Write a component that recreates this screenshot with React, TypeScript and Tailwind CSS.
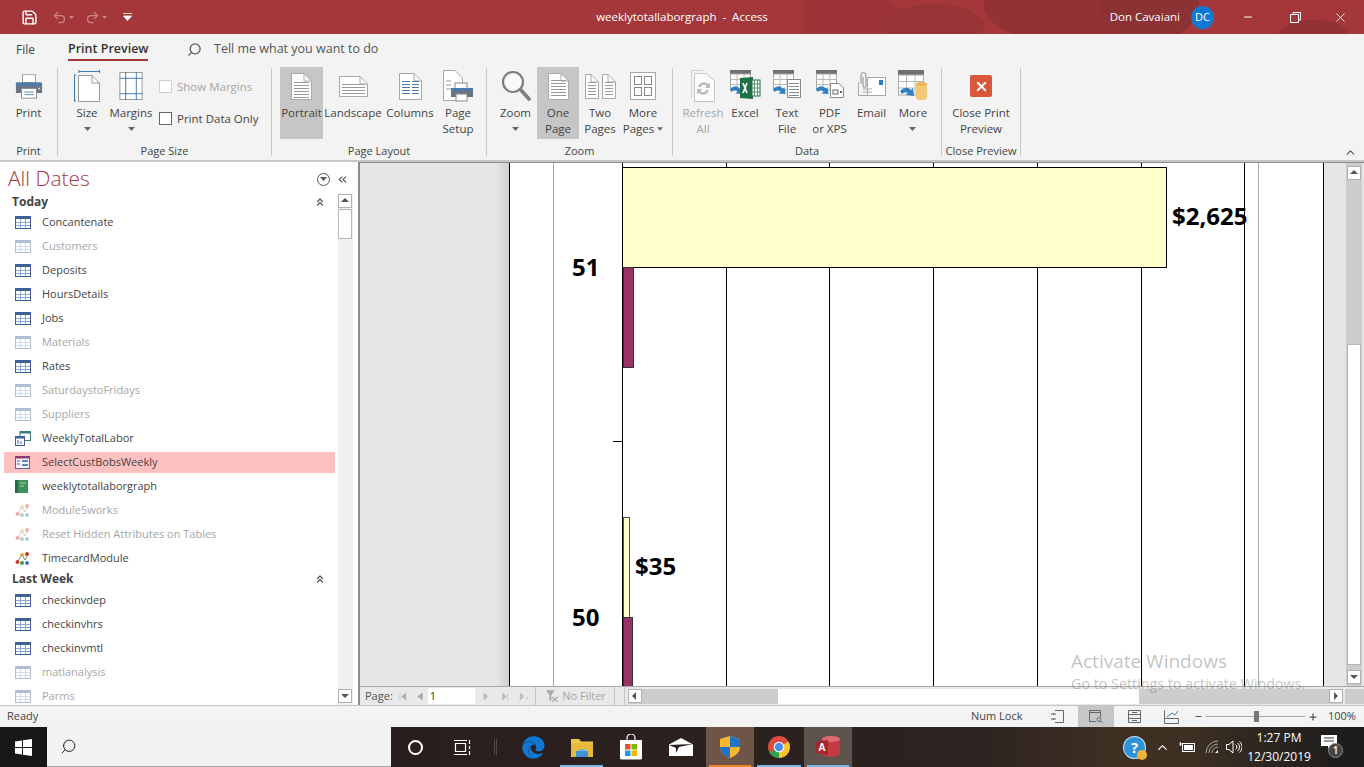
import React from 'react';
import { Save, Undo2, Redo2, Search, Minus, X, ChevronsUp, ChevronsLeft, ChevronUp, Plus } from 'lucide-react';
import { FaEdge } from 'react-icons/fa';

const Caret = ({ c = '#666' }: { c?: string }) => (
  <svg width="7" height="4" viewBox="0 0 7 4" className="mx-auto"><path d="M0 0h7L3.5 4z" fill={c} /></svg>
);

const PageLines = ({ x, y, w, n, gap = 3, c = '#999' }: { x: number; y: number; w: number; n: number; gap?: number; c?: string }) => (
  <>{Array.from({ length: n }).map((_, i) => <path key={i} d={`M${x} ${y + i * gap + 0.5}h${w}`} stroke={c} />)}</>
);

const Doc = ({ w, h, children }: { w: number; h: number; children?: React.ReactNode }) => (
  <svg width={w} height={h} viewBox={`0 0 ${w} ${h}`}>
    <path d={`M.5 .5H${w - 8}L${w - .5} 8V${h - .5}H.5z`} fill="#fff" stroke="#a8a8a8" />
    <path d={`M${w - 8} .5V8H${w - .5}`} fill="none" stroke="#a8a8a8" />
    {children}
  </svg>
);

const PrinterIcon = () => (
  <svg width="28" height="26" viewBox="0 0 30 30" preserveAspectRatio="none">
    <rect x="8" y="2" width="14" height="9" fill="#fff" stroke="#9a9a9a" />
    <path d="M3 11h24a2 2 0 0 1 2 2v10H1V13a2 2 0 0 1 2-2z" fill="#6b7480" />
    <path d="M1 11h28v4H1z" fill="#4a7bab" />
    <rect x="7" y="18" width="16" height="11" fill="#fff" stroke="#8a8a8a" />
    <path d="M10 22h10M10 25h10" stroke="#4a7bab" />
    <rect x="25" y="17" width="2" height="2" fill="#ddd" />
  </svg>
);

const SizeIcon = () => (
  <svg width="26" height="32" viewBox="0 0 26 32">
    <path d="M5 1.5h21M5 0v3M25.5 0v3M.5 5v26M0 5h2M0 31h2" stroke="#3d78ae" fill="none" />
    <path d="M4.5 5.5H18L25.5 13V31.5H4.5z" fill="#fff" stroke="#9a9a9a" />
    <path d="M18 5.5V13H25.5" fill="none" stroke="#9a9a9a" />
  </svg>
);
const MarginsIcon = () => (
  <svg width="24" height="28" viewBox="0 0 24 29">
    <rect x=".5" y=".5" width="23" height="28" fill="#fff" stroke="#9a9a9a" />
    <path d="M6.5 0v29M17.5 0v29M0 6.5h24M0 22.5h24" stroke="#3d78ae" />
  </svg>
);

const DataGrid = () => (
  <>
    <rect x="1" y="0" width="21" height="4" fill="#6f6f6f" />
    <rect x="1.5" y="4" width="20" height="16" fill="#fff" stroke="#a8a8a8" />
    <path d="M8 4v16M15 4v16M1 9.5h21M1 14.5h21" stroke="#b8b8b8" />
  </>
);
const Arrow = () => (
  <path d="M1 19q5-5 10-.5l1.5-1.5 1 7-7-.5 2-2q-3-2.5-6 .5z" fill="#2f7fc1" />
);

const ExcelIcon = () => (
  <svg width="32" height="32" viewBox="0 0 32 32"><DataGrid /><Arrow />
    <path d="M11 8l13-1v22l-13-1z" fill="#1e7145" /><rect x="23" y="10" width="8" height="16" fill="#fff" stroke="#1e7145" />
    <path d="M25.5 10v16M28.5 10v16M23 14h8M23 18h8M23 22h8" stroke="#1e7145" strokeWidth=".7" />
    <path d="M14 13l4 10M18 13l-4 10" stroke="#fff" strokeWidth="1.7" />
  </svg>
);
const TextFileIcon = () => (
  <svg width="30" height="32" viewBox="0 0 30 32"><DataGrid /><Arrow />
    <rect x="15.5" y="9.5" width="13" height="18" fill="#fff" stroke="#8a8a8a" />
    <PageLines x={17} y={13} w={10} n={5} c="#8a8a8a" />
  </svg>
);
const PdfIcon = () => (
  <svg width="30" height="32" viewBox="0 0 30 32"><DataGrid /><Arrow />
    <path d="M15.5 13.5H24L28.5 18V27.5H15.5z" fill="#fff" stroke="#8a8a8a" />
    <rect x="18" y="20" width="5" height="4" fill="none" stroke="#666" /><rect x="25" y="21" width="2" height="2" fill="#666" />
  </svg>
);
const EmailIcon = () => (
  <svg width="28" height="30" viewBox="0 0 28 30">
    <path d="M3 13V4a2.500 2.500 0 0 1 5 0v11a1.500 1.500 0 0 1-3 0V6" fill="none" stroke="#8a8a8a" />
    <rect x="9.500" y="6.500" width="18" height="18" fill="#fff" stroke="#a8a8a8" />
    <path d="M.5 11.500v13h27" fill="none" stroke="#a8a8a8" />
    <rect x="21" y="9" width="4" height="5" fill="#2f7fc1" />
    <path d="M5 18h9M5 21h9" stroke="#aaa" />
  </svg>
);
const MoreDataIcon = () => (
  <svg width="30" height="32" viewBox="0 0 30 32">
    <rect x="0" y="0" width="26" height="5" fill="#6f6f6f" />
    <rect x=".5" y="5" width="25" height="20" fill="#fff" stroke="#a8a8a8" />
    <path d="M8.500 5v20M17 5v20M0 11.500h26M0 18h26" stroke="#b8b8b8" />
    <path d="M2 21q6-6 11-1l2-2 1 8-8-1 2-2q-3-2-6 1z" fill="#2f7fc1" />
    <path d="M18 14a5 2 0 0 1 11 0v14a5 2 0 0 1-11 0z" fill="#f0c878" />
    <ellipse cx="23.500" cy="14" rx="5.500" ry="2" fill="#e9b75c" />
  </svg>
);

const RefreshIcon = () => (
  <svg width="24" height="32" viewBox="0 0 24 32">
    <path d="M3.500 3.500H15L23.500 11V31.500H3.500z" fill="#fbfbfb" stroke="#c4c4c4" />
    <path d="M.5 .5H12" stroke="#d0d0d0" />
    <path d="M.5 .5V28" stroke="#d0d0d0" />
    <path d="M7 17a6 6 0 0 1 10-3l2-1v5h-5l1.500-2a3.500 3.500 0 0 0-6 1zM18 20a6 6 0 0 1-10 3l-2 1v-5h5l-1.500 2a3.500 3.500 0 0 0 6-1z" fill="#bbb" />
  </svg>
);

const ClosePrev = () => (
  <div className="w-[22px] h-[22px] rounded-[2px] bg-[#d9573a] flex items-center justify-center">
    <X size={15} color="#fff" strokeWidth={3.2} />
  </div>
);

const ZoomIcon = () => (
  <svg width="30" height="32" viewBox="0 0 30 32">
    <circle cx="12" cy="12" r="10" fill="#fff" fillOpacity=".5" stroke="#7d7d7d" strokeWidth="2.200" />
    <path d="M19.500 19.500L28 29" stroke="#7d7d7d" strokeWidth="3.600" strokeLinecap="round" />
  </svg>
);

type BtnProps = { w: string; icon: React.ReactNode; lines: string[]; active?: boolean; dim?: boolean; caret?: boolean; inlineCaret?: boolean };
const Btn = ({ w, icon, lines, active, dim, caret, inlineCaret }: BtnProps) => (
  <div className={`${w} h-[72px] flex flex-col items-center shrink-0 ${active ? 'bg-[#c6c6c6]' : ''}`}>
    <div className="h-[38px] w-full flex items-center justify-center">{icon}</div>
    <div className={`text-[11.5px] leading-[16px] text-center whitespace-nowrap ${dim ? 'text-[#a6a6a6]' : 'text-[#444]'}`}>
      {lines.map((l, i) => (
        <div key={i} className="flex items-center justify-center gap-[3px]">
          {l}{inlineCaret && i === lines.length - 1 ? <svg width="6" height="4" viewBox="0 0 7 4"><path d="M0 0h7L3.500 4z" fill="#666" /></svg> : null}
        </div>
      ))}
      {caret ? <div className="h-[16px] flex items-center"><Caret /></div> : null}
    </div>
  </div>
);

const Group = ({ w, pl, label, children }: { w: string; pl: string; label: string; children: React.ReactNode }) => (
  <div className={`${w} shrink-0 flex flex-col`}>
    <div className={`h-[79px] pt-[3px] flex ${pl}`}>{children}</div>
    <div className="h-[17px] flex items-center justify-center text-[11px] text-[#444] whitespace-nowrap">{label}</div>
  </div>
);
const Sep = () => <div className="w-px h-[88px] mt-[4px] bg-[#c8c8c8] shrink-0" />;

const TableIcon = ({ dim }: { dim?: boolean }) => (
  <svg width="16" height="13" viewBox="0 0 16 13" opacity={dim ? .4 : 1}>
    <rect x=".5" y=".5" width="15" height="12" fill="#fff" stroke="#3f5f98" />
    <rect x="0" y="0" width="16" height="3" fill="#3f5f98" />
    <path d="M5.500 3v9M10.500 3v9M1 6.500h14M1 9.500h14" stroke="#8ba6d4" />
  </svg>
);
const QueryIcon = () => (
  <svg width="16" height="15" viewBox="0 0 16 15">
    <rect x="5" y=".5" width="10.500" height="9" fill="#fff" stroke="#3a7d7d" />
    <rect x="5" y="0" width="11" height="2.500" fill="#3a7d7d" />
    <rect x=".5" y="5.500" width="9" height="9" fill="#fff" stroke="#3f5f98" />
    <rect x="0" y="5" width="10" height="2.500" fill="#3f5f98" />
    <path d="M3 9v4M6 10v3" stroke="#3f5f98" />
  </svg>
);
const FormIcon = () => (
  <svg width="15" height="13" viewBox="0 0 15 13">
    <rect x=".5" y=".5" width="14" height="12" fill="#f5f3fa" stroke="#6b5b95" />
    <rect x="0" y="0" width="15" height="2.500" fill="#8b3c6f" />
    <path d="M2 5h3M2 8h3" stroke="#6b5b95" /><rect x="7" y="4" width="6" height="2" fill="#5e86c4" /><rect x="7" y="8" width="6" height="2" fill="#5e86c4" />
  </svg>
);
const ReportIcon = () => (
  <svg width="13" height="13" viewBox="0 0 13 13">
    <rect width="13" height="13" fill="#3f8f5b" /><rect width="3" height="13" fill="#2c6a41" />
    <path d="M5 3h6M5 6h4" stroke="#a6d8b5" />
  </svg>
);
const ModuleIcon = ({ dim }: { dim?: boolean }) => (
  <svg width="16" height="15" viewBox="0 0 16 15" opacity={dim ? .4 : 1}>
    <path d="M2 11L7 4l3 5 4-7" fill="none" stroke="#888" />
    <circle cx="2.500" cy="11" r="2" fill="#d1372f" /><circle cx="7" cy="4" r="2" fill="#e0a43a" />
    <circle cx="7" cy="12" r="2" fill="#3e9a4f" /><circle cx="12" cy="12" r="2" fill="#3d78c4" /><circle cx="12" cy="3" r="2" fill="#d1372f" />
  </svg>
);

type NavT = 'table' | 'tableD' | 'query' | 'form' | 'report' | 'module' | 'moduleD';
const NavItem = ({ t, label, sel }: { t: NavT; label: string; sel?: boolean }) => {
  const dim = t === 'tableD' || t === 'moduleD';
  return (
    <div className="h-[24px] flex items-center pl-[4px] shrink-0">
      <div className={`w-[331px] h-[21px] flex items-center pl-[11px] ${sel ? 'bg-[#ffc0c0]' : ''}`}>
        <div className="w-[27px] flex items-center">
          {t === 'table' && <TableIcon />}
          {t === 'tableD' && <TableIcon dim />}
          {t === 'query' && <QueryIcon />}
          {t === 'form' && <FormIcon />}
          {t === 'report' && <ReportIcon />}
          {t === 'module' && <ModuleIcon />}
          {t === 'moduleD' && <ModuleIcon dim />}
        </div>
        <span className={`text-[11px] whitespace-nowrap ${dim ? 'text-[#a6a6a6]' : 'text-[#444]'}`}>{label}</span>
      </div>
    </div>
  );
};

const NavHead = ({ label, pt }: { label: string; pt: string }) => (
  <div className={`h-[18px] ${pt} flex items-center justify-between pl-[12px] w-[335px] shrink-0`}>
    <span className="text-[12px] font-bold text-[#444]">{label}</span>
    <ChevronsUp size={12} color="#555" strokeWidth={2.5} className="mr-[9px]" />
  </div>
);

const ArrowBtn = ({ d, cls }: { d: 'up' | 'down' | 'left' | 'right'; cls?: string }) => {
  const p = { up: 'M1 6h8L5 2z', down: 'M1 3h8L5 7z', left: 'M6 1v8L2 5z', right: 'M3 1v8L7 5z' }[d];
  return (
    <div className={`w-[14px] h-[14px] bg-white border border-[#b0b0b0] flex items-center justify-center shrink-0 ${cls ?? ''}`}>
      <svg width="10" height="10" viewBox="0 0 10 10"><path d={p} fill="#555" /></svg>
    </div>
  );
};

const Line = ({ x, c = 'bg-black' }: { x: string; c?: string }) => <div className={`absolute top-0 bottom-0 w-px ${c} ${x}`} />;

const StoreIcon = () => (
  <svg width="24" height="26" viewBox="0 0 24 26">
    <path d="M8 6V4a4 4 0 0 1 8 0v2" fill="none" stroke="#fff" strokeWidth="1.200" />
    <path d="M1 6h22v18a1.500 1.500 0 0 1-1.500 1.500h-19A1.500 1.500 0 0 1 1 24z" fill="#fff" />
    <rect x="6" y="10" width="5.500" height="5.500" fill="#e9502b" /><rect x="12.500" y="10" width="5.500" height="5.500" fill="#7fba00" />
    <rect x="6" y="16.500" width="5.500" height="5.500" fill="#1e9be8" /><rect x="12.500" y="16.500" width="5.500" height="5.500" fill="#fdb900" />
  </svg>
);

const TaskSlot = ({ w, children, bar, bg }: { w: string; children: React.ReactNode; bar?: string; bg?: string }) => (
  <div className={`${w} h-full flex items-center justify-center relative shrink-0 ${bg ?? ''}`}>
    {children}
    {bar ? <div className={`absolute left-[3px] right-[3px] bottom-0 h-[2px] ${bar}`} /> : null}
  </div>
);

export default function App() {
  return (
    <div className="w-[1364px] h-[767px] overflow-hidden flex flex-col bg-[#f3f3f3] font-['Open_Sans',sans-serif] text-[#444] relative">
      {/* Title bar */}
      <div className="h-[34px] bg-[#a4373a] relative flex items-center shrink-0 overflow-hidden text-[12px] text-white">
        <svg className="absolute right-0 top-0" width="560" height="34" viewBox="0 0 560 34">
          <ellipse cx="40" cy="20" rx="60" ry="30" fill="#9c3437" />
          <ellipse cx="130" cy="26" rx="50" ry="22" fill="#983336" />
          <ellipse cx="270" cy="6" rx="90" ry="38" fill="#933235" />
          <ellipse cx="345" cy="2" rx="50" ry="40" fill="#8c3134" />
          <ellipse cx="510" cy="34" rx="35" ry="14" fill="#933235" />
        </svg>
        <div className="relative w-full h-full flex items-center">
          <div className="w-[52px] flex justify-end pr-[14px]"><Save size={17} color="#fff" strokeWidth={2} /></div>
          <div className="w-[33px] flex items-center gap-[2px]"><Undo2 size={15} color="#c98587" /><svg width="5" height="3" viewBox="0 0 7 4"><path d="M0 0h7L3.500 4z" fill="#c98587" /></svg></div>
          <div className="w-[38px] flex items-center gap-[2px]"><Redo2 size={15} color="#c98587" /><svg width="5" height="3" viewBox="0 0 7 4"><path d="M0 0h7L3.500 4z" fill="#c98587" /></svg></div>
          <svg width="9" height="8" viewBox="0 0 9 8"><path d="M0 .5h9M.5 3h8L4.500 7.500z" stroke="#fff" fill="#fff" strokeWidth=".8" /></svg>
          <div className="absolute left-0 w-full top-0 h-full flex items-center justify-center text-[11.5px]">weeklytotallaborgraph&nbsp; -&nbsp; Access</div>
          <div className="ml-auto flex items-center">
            <span className="text-[11.5px] mr-[11px]">Don Cavaiani</span>
            <div className="w-[23px] h-[23px] rounded-full bg-[#0f78d4] flex items-center justify-center text-[11px] mr-[28px]">DC</div>
            <Minus size={12} color="#fff" className="mr-[36px]" />
            <svg width="11" height="11" viewBox="0 0 11 11" className="mr-[32px]"><path d="M3 2.500V.5h7.500V8H8.500M.5 2.500H8.500V10.500H.5z" fill="none" stroke="#fff" /></svg>
            <X size={15} color="#fff" strokeWidth={1.3} className="mr-[16px]" />
          </div>
        </div>
      </div>

      {/* Tabs */}
      <div className="h-[30px] pt-[1px] flex items-center shrink-0 text-[12px] relative">
        <span className="ml-[16px] w-[52px]">File</span>
        <span className="relative w-[119px] font-semibold text-[12.5px] text-[#333]">Print Preview
          <span className="absolute left-0 w-[80px] top-[19px] h-[2px] bg-[#a4373a]" />
        </span>
        <Search size={15} color="#555" className="-scale-x-100" />
        <span className="ml-[12px] text-[#555] text-[12.5px]">Tell me what you want to do</span>
      </div>

      {/* Ribbon */}
      <div className="h-[96px] flex shrink-0 relative">
        <Group w="w-[57px]" pl="" label="Print">
          <Btn w="w-[57px]" icon={<PrinterIcon />} lines={['Print']} />
        </Group>
        <Sep />
        <Group w="w-[213px]" pl="pl-[7px]" label="Page Size">
          <Btn w="w-[44px]" icon={<SizeIcon />} lines={['Size']} caret />
          <Btn w="w-[44px]" icon={<MarginsIcon />} lines={['Margins']} caret />
          <div className="ml-[6px] flex flex-col gap-[13px] pt-[10px] text-[11.5px] whitespace-nowrap">
            <div className="flex items-center gap-[5px] h-[19px] text-[#a6a6a6]"><div className="w-[13px] h-[13px] border border-[#d0d0d0] bg-white" />Show Margins</div>
            <div className="flex items-center gap-[5px] h-[19px] text-[#444]"><div className="w-[13px] h-[13px] border border-[#666] bg-white" />Print Data Only</div>
          </div>
        </Group>
        <Sep />
        <Group w="w-[214px]" pl="pl-[8px]" label="Page Layout">
          <Btn w="w-[43px]" active icon={<Doc w={21} h={27}><PageLines x={3} y={9} w={15} n={6} /></Doc>} lines={['Portrait']} />
          <Btn w="w-[60px]" icon={<Doc w={29} h={21}><PageLines x={3} y={8} w={23} n={4} /></Doc>} lines={['Landscape']} />
          <Btn w="w-[54px]" icon={<Doc w={23} h={27}><PageLines x={3} y={8} w={8} n={5} c="#4a7bab" /><PageLines x={13} y={8} w={7} n={5} c="#4a7bab" /></Doc>} lines={['Columns']} />
          <Btn w="w-[42px]" icon={
            <svg width="30" height="32" viewBox="0 0 30 32">
              <path d="M.5 .5H12L19.500 8V30.500H.5z" fill="#fff" stroke="#a8a8a8" />
              <path d="M3 11h5M3 15h5M3 19h5" stroke="#999" />
              <rect x="12" y="13" width="12" height="6" fill="#fff" stroke="#888" />
              <path d="M8 18h22v9H8z" fill="#6b7480" /><path d="M8 18h22v3H8z" fill="#4a7bab" />
              <rect x="13" y="24" width="11" height="7" fill="#fff" stroke="#888" />
            </svg>} lines={['Page', 'Setup']} />
        </Group>
        <Sep />
        <Group w="w-[185px]" pl="pl-[7px]" label="Zoom">
          <Btn w="w-[43px]" icon={<ZoomIcon />} lines={['Zoom']} caret />
          <Btn w="w-[42px]" active icon={<Doc w={21} h={27}><PageLines x={3} y={7} w={15} n={6} /></Doc>} lines={['One', 'Page']} />
          <Btn w="w-[42px]" icon={<div className="flex gap-[3px]"><Doc w={14} h={25}><PageLines x={3} y={8} w={8} n={5} /></Doc><Doc w={14} h={25}><PageLines x={3} y={8} w={8} n={5} /></Doc></div>} lines={['Two', 'Pages']} />
          <Btn w="w-[44px]" inlineCaret icon={
            <svg width="26" height="28" viewBox="0 0 26 28">
              <rect x=".5" y=".5" width="25" height="27" fill="#fff" stroke="#a8a8a8" />
              <rect x="4.500" y="4.500" width="7" height="8" fill="none" stroke="#888" /><rect x="14.500" y="4.500" width="7" height="8" fill="none" stroke="#888" />
              <rect x="4.500" y="15.500" width="7" height="8" fill="none" stroke="#888" /><rect x="14.500" y="15.500" width="7" height="8" fill="none" stroke="#888" />
            </svg>} lines={['More', 'Pages']} />
        </Group>
        <Sep />
        <Group w="w-[268px]" pl="pl-[9px]" label="Data">
          <Btn w="w-[42px]" dim icon={<RefreshIcon />} lines={['Refresh', 'All']} />
          <Btn w="w-[42px]" icon={<ExcelIcon />} lines={['Excel']} />
          <Btn w="w-[42px]" icon={<TextFileIcon />} lines={['Text', 'File']} />
          <Btn w="w-[43px]" icon={<PdfIcon />} lines={['PDF', 'or XPS']} />
          <Btn w="w-[41px]" icon={<EmailIcon />} lines={['Email']} />
          <Btn w="w-[42px]" icon={<MoreDataIcon />} lines={['More']} caret />
        </Group>
        <Sep />
        <Group w="w-[78px]" pl="" label="Close Preview">
          <Btn w="w-[78px]" icon={<ClosePrev />} lines={['Close Print', 'Preview']} />
        </Group>
        <Sep />
        <ChevronUp size={13} color="#555" className="absolute right-[7px] bottom-[1px]" />
      </div>

      {/* Main */}
      <div className="flex-1 min-h-0 flex border-t-2 border-[#c6c6c6] border-b border-b-[#c6c6c6]">
        {/* Nav pane */}
        <div className="w-[358px] shrink-0 bg-white relative overflow-hidden flex flex-col">
          <div className="h-[30px] pt-[4px] flex items-center pl-[8px] shrink-0">
            <span className="text-[21px] text-[#a4373a] font-light">All Dates</span>
            <div className="ml-auto flex items-center gap-[6px] mr-[9px]">
              <div className="w-[13px] h-[13px] rounded-full border border-[#555] flex items-center justify-center"><svg width="7" height="4" viewBox="0 0 7 4"><path d="M0 0h7L3.500 4z" fill="#555" /></svg></div>
              <ChevronsLeft size={13} color="#555" />
            </div>
          </div>
          <NavHead label="Today" pt="pt-[2px]" />
          <NavItem t="table" label="Concantenate" />
          <NavItem t="tableD" label="Customers" />
          <NavItem t="table" label="Deposits" />
          <NavItem t="table" label="HoursDetails" />
          <NavItem t="table" label="Jobs" />
          <NavItem t="tableD" label="Materials" />
          <NavItem t="table" label="Rates" />
          <NavItem t="tableD" label="SaturdaystoFridays" />
          <NavItem t="tableD" label="Suppliers" />
          <NavItem t="query" label="WeeklyTotalLabor" />
          <NavItem t="form" label="SelectCustBobsWeekly" sel />
          <NavItem t="report" label="weeklytotallaborgraph" />
          <NavItem t="moduleD" label="Module5works" />
          <NavItem t="moduleD" label="Reset Hidden Attributes on Tables" />
          <NavItem t="module" label="TimecardModule" />
          <NavHead label="Last Week" pt="" />
          <NavItem t="table" label="checkinvdep" />
          <NavItem t="table" label="checkinvhrs" />
          <NavItem t="table" label="checkinvmtl" />
          <NavItem t="tableD" label="matlanalysis" />
          <NavItem t="tableD" label="Parms" />
          {/* scrollbar overlays the pane */}
          <div className="absolute left-[338px] top-[32px] bottom-0 w-[15px] bg-[#f0f0f0] flex flex-col">
            <ArrowBtn d="up" />
            <div className="w-[14px] h-[30px] bg-white border border-[#b8b8b8] mt-[1px]" />
            <ArrowBtn d="down" cls="mt-auto mb-[2px]" />
          </div>
        </div>
        <div className="w-[2px] bg-[#8c8c8c] shrink-0" />

        {/* Preview */}
        <div className="flex-1 min-w-0 flex flex-col">
          <div className="flex-1 min-h-0 flex bg-[#e5e5e5] border-t border-[#8c8c8c]">
            <div className="w-[149px] shrink-0 bg-[linear-gradient(90deg,#e5e5e5_92%,#cfcfcf)]" />
            <div className="w-[815px] shrink-0 bg-white border-x border-black relative overflow-hidden font-['Noto_Sans',sans-serif] font-bold text-black">
              <Line x="left-[43px]" c="bg-[#a8a8a8]" />
              <Line x="left-[112px]" />
              <Line x="left-[216px]" />
              <Line x="left-[319px]" />
              <Line x="left-[423px]" />
              <Line x="left-[527px]" />
              <Line x="left-[631px]" />
              <Line x="left-[734px]" />
              <Line x="left-[748px]" c="bg-[#a8a8a8]" />
              <div className="absolute left-[112px] top-[4px] w-[545px] h-[101px] bg-[#ffffcc] border border-black" />
              <div className="absolute left-[113px] top-[104px] w-[11px] h-[101px] bg-[#993366] border border-[#333]" />
              <div className="absolute left-[103px] top-[278px] w-[10px] h-px bg-black" />
              <div className="absolute left-[113px] top-[354px] w-[7px] h-[101px] bg-[#ffffcc] border border-[#555]" />
              <div className="absolute left-[113px] top-[454px] w-[10px] h-[80px] bg-[#993366] border border-[#333]" />
              <div className="absolute left-[62px] top-[89px] text-[24px] leading-[30px]">51</div>
              <div className="absolute left-[62px] top-[439px] text-[24px] leading-[30px]">50</div>
              <div className="absolute left-[662px] top-[38px] text-[24px] leading-[30px] whitespace-nowrap">$2,625</div>
              <div className="absolute left-[125px] top-[388px] text-[24px] leading-[30px] whitespace-nowrap">$35</div>
            </div>
            <div className="w-[22px] shrink-0" />
            <div className="w-[16px] shrink-0 bg-[#cdcdcd] flex flex-col pt-[3px] items-center">
              <ArrowBtn d="up" />
              <div className="w-[14px] h-[321px] bg-white border border-[#b8b8b8] mt-[164px]" />
              <ArrowBtn d="down" cls="mt-[5px]" />
            </div>
          </div>
          {/* page bar */}
          <div className="h-[19px] flex items-center shrink-0 bg-[#e9e9e9] border-t border-[#a8a8a8] text-[11px]">
            <span className="ml-[5px] w-[35px] text-[#555]">Page:</span>
            <svg width="25" height="9" viewBox="0 0 25 9" className="mr-[4px]"><path d="M1 1v7M7 1v7L3 4.500zM24 1v7L19 4.500z" fill="#aaa" stroke="#aaa" strokeWidth=".6" /></svg>
            <div className="w-[48px] h-[16px] bg-white text-[#333] pl-[2px] leading-[16px]">1</div>
            <svg width="46" height="9" viewBox="0 0 46 9" className="ml-[8px]"><path d="M1 1v7L5 4.500zM20 1v7l4-3.500zM25.500 1v7M38 1v7l4-3.500z" fill="#bbb" stroke="#bbb" strokeWidth=".6" /><circle cx="45" cy="6" r="1" fill="#d8c68a" /></svg>
            <div className="w-px h-[18px] bg-[#c4c4c4] ml-[7px]" />
            <svg width="14" height="14" viewBox="0 0 14 14" className="ml-[9px]"><path d="M1 1h9L6.500 6v5L4.500 12V6z" fill="#aaa" /><path d="M7 8l6 5M13 8l-6 5" stroke="#aaa" strokeWidth="1.300" /></svg>
            <span className="ml-[4px] text-[#a6a6a6] w-[53px]">No Filter</span>
            <div className="w-px h-[18px] bg-[#c4c4c4]" />
            <div className="w-px h-[18px] bg-[#c4c4c4] ml-[9px]" />
            <div className="ml-[3px] flex-1 h-[15px] flex items-center bg-[#cdcdcd]">
              <ArrowBtn d="left" />
              <div className="w-[136px]" />
              <div className="w-[361px] h-[15px] bg-white" />
              <div className="w-[190px]" />
              <ArrowBtn d="right" />
            </div>
            <div className="w-[19px] h-[15px] shrink-0 ml-[2px] bg-[#cdcdcd]" />
          </div>
        </div>
      </div>

      {/* Status bar */}
      <div className="h-[21px] shrink-0 flex items-center text-[11px] text-[#444] bg-[#f3f3f3]">
        <span className="ml-[7px] w-[31px]">Ready</span>
        <span className="ml-[933px] w-[81px]">Num Lock</span>
        <svg width="13" height="13" viewBox="0 0 13 13" className="ml-[-1px]"><path d="M4 .5h8.500v12H4M0 4h5M0 9h5M2.500 3v2M2.500 8v2" fill="none" stroke="#666" /></svg>
        <div className="w-[36px] h-[21px] bg-[#c6c6c6] ml-[14px] flex items-center justify-center">
          <svg width="14" height="13" viewBox="0 0 14 13"><path d="M.5 12V.5h11V7M.5 2.500h11M.5 11.500H7" fill="none" stroke="#666" /><circle cx="10" cy="9.500" r="2" fill="none" stroke="#666" /><path d="M11.500 11L13.500 13" stroke="#666" /></svg>
        </div>
        <svg width="13" height="13" viewBox="0 0 13 13" className="ml-[14px]"><path d="M.5 .5h12v12H.5zM.5 4.500h12M.5 8.500h12M4 2.500h5M4 10.500h5" fill="none" stroke="#666" /></svg>
        <svg width="15" height="14" viewBox="0 0 15 14" className="ml-[23px]"><path d="M.5 .5V8.500H14.500V13.500H.5V8.500" fill="none" stroke="#666" /><path d="M3 7l5-4 3 2 3-4" fill="none" stroke="#4a7bab" /></svg>
        <Minus size={9} color="#555" strokeWidth={3} className="ml-[15px]" />
        <div className="w-[99px] h-px bg-[#a8a8a8] ml-[3px] relative">
          <div className="absolute left-[48px] top-[-5px] w-[5px] h-[11px] bg-[#777]" />
        </div>
        <Plus size={10} color="#555" strokeWidth={3} className="ml-[3px]" />
        <span className="ml-[10px]">100%</span>
      </div>

      {/* Taskbar */}
      <div className="h-[40px] shrink-0 flex items-center bg-[#1c1c1c] relative">
        <div className="w-[47px] h-full flex items-center justify-center bg-[#171717]">
          <svg width="17" height="17" viewBox="0 0 17 17"><path d="M0 2.500l7-1v6.500H0zM8 1.300L17 0v8H8zM0 9h7v6.500l-7-1zM8 9h9v8l-9-1.300z" fill="#fff" /></svg>
        </div>
        <div className="w-[344px] h-full bg-[#f2f2f2] flex items-center pl-[13px] border-b border-[#a8a8a8]">
          <Search size={17} color="#222" className="-scale-x-100" strokeWidth={1.4} />
        </div>
        <div className="flex-1 h-full flex items-center bg-[linear-gradient(90deg,#2a1f1e_0%,#2c2320_60%,#3f3023_75%,#3d2f22_82%,#1c1c1c_98%)]">
          <TaskSlot w="w-[48px]"><div className="w-[15px] h-[15px] rounded-full border-[2px] border-white" /></TaskSlot>
          <TaskSlot w="w-[48px]">
            <svg width="18" height="15" viewBox="0 0 18 15"><path d="M0 .5h13M0 14.500h13M1.500 3.500h10v8h-10z M15.500 0v4M15.500 6v3M15.500 11v4" fill="none" stroke="#fff" strokeWidth="1.200" /></svg>
          </TaskSlot>
          <div className="w-[3px] h-[16px] border-x border-[#4a4a4a] ml-[7px] mr-[12px]" />
          <TaskSlot w="w-[48px]"><FaEdge size={23} color="#0f78d4" /></TaskSlot>
          <TaskSlot w="w-[49px]" bar="bg-[#76b9ed]">
            <svg width="22" height="19" viewBox="0 0 22 19"><path d="M0 1h8l2 2.500h12V19H0z" fill="#f2c84b" /><path d="M0 5h22v14H0z" fill="#e8b93a" /><path d="M5 19v-6h12v6z" fill="#3f93d9" /><path d="M8 11h6v2H8z" fill="#6fb5ea" /></svg>
          </TaskSlot>
          <TaskSlot w="w-[49px]"><StoreIcon /></TaskSlot>
          <TaskSlot w="w-[51px]">
            <svg width="24" height="18" viewBox="0 0 24 18"><path d="M0 6.500L12 0l12 6.500V18H0z" fill="#fff" /><path d="M0 7L24 6 10 9 7 15V10z" fill="#2a201e" /></svg>
          </TaskSlot>
          <TaskSlot w="w-[48px]" bar="bg-[#f2811d]" bg="bg-[#6e5547]">
            <svg width="20" height="22" viewBox="0 0 20 22"><path d="M10 0L20 3v8c0 6-5 9-10 11C5 20 0 17 0 11V3z" fill="#f8b72d" /><path d="M10 0L20 3v8H10zM0 11h10v11C5 20 0 17 0 11z" fill="#1f74c9" /></svg>
          </TaskSlot>
          <TaskSlot w="w-[50px]" bar="bg-[#76b9ed]">
            <svg width="22" height="22" viewBox="0 0 22 22">
              <circle cx="11" cy="11" r="11" fill="#dd4b3e" />
              <path d="M11 11L1.500 16.500A11 11 0 0 0 11 22z" fill="#2fa44f" /><path d="M11 11L20.500 5.500A11 11 0 0 1 11 22z" fill="#f7c62f" />
              <circle cx="11" cy="11" r="5.300" fill="#fff" /><circle cx="11" cy="11" r="4.200" fill="#4a8cf0" />
            </svg>
          </TaskSlot>
          <TaskSlot w="w-[48px]" bar="bg-[#76b9ed]" bg="bg-[#5e534d]">
            <svg width="24" height="22" viewBox="0 0 24 22">
              <path d="M6 3a9 3 0 0 1 18 0v15a9 3 0 0 1-18 0z" fill="#c23a42" /><ellipse cx="15" cy="3" rx="9" ry="3" fill="#dd6a6e" />
              <path d="M0 6l12-2v15L0 17z" fill="#a4262c" />
              <text x="6" y="15" fontSize="10" fontWeight="700" fill="#fff" textAnchor="middle" fontFamily="Open Sans">A</text>
            </svg>
          </TaskSlot>
          <div className="flex-1" />
          {/* Tray */}
          <div className="relative w-[23px] h-[23px] rounded-full bg-[#2f93d8] border border-white/70 flex items-center justify-center text-white font-bold text-[15px] leading-none shrink-0">?
            <div className="absolute right-[-2px] bottom-[-2px] w-[10px] h-[10px] rounded-full bg-[#f2b233]" />
          </div>
          <ChevronUp size={15} color="#fff" className="ml-[9px]" />
          <svg width="16" height="12" viewBox="0 0 16 12" className="ml-[9px]"><path d="M0 3h3M1.500 1v4" stroke="#fff" /><rect x="3.500" y="2.500" width="12" height="8" fill="none" stroke="#fff" /><rect x="5" y="4" width="9" height="5" fill="#fff" /></svg>
          <svg width="15" height="14" viewBox="0 0 15 14" className="ml-[10px]"><path d="M1 13A12 12 0 0 1 13 1M4 13a9 9 0 0 1 9-9M7 13a6 6 0 0 1 6-6" fill="none" stroke="#aaa" /><path d="M13 13h-3l3-3z" fill="#fff" /></svg>
          <svg width="16" height="14" viewBox="0 0 16 14" className="ml-[6px]"><path d="M.5 4.500h2.500L7 1v12L3 9.500H.5z" fill="none" stroke="#fff" /><path d="M9.500 4.500a3 3 0 0 1 0 5M11.500 3a5 5 0 0 1 0 8M13.500 1.500a7 7 0 0 1 0 11" fill="none" stroke="#fff" /></svg>
          <div className="w-[62px] ml-[6px] text-[12px] leading-[19px] text-white text-center whitespace-nowrap flex flex-col items-center">
            <span>1:27 PM</span><span>12/30/2019</span>
          </div>
          <div className="relative w-[24px] h-[24px] ml-[11px] mr-[19px] shrink-0">
            <svg width="16" height="15" viewBox="0 0 16 15" className="absolute left-0 top-0"><path d="M0 0h16v11H9l-2 3v-3H0z" fill="#fff" /><path d="M3 3h10M3 6h10" stroke="#333" /></svg>
            <div className="absolute left-[7px] top-[8px] w-[15px] h-[15px] rounded-full bg-[#444] border border-[#888] text-white text-[10px] font-semibold leading-[13px] text-center">1</div>
          </div>
        </div>
      </div>

      {/* Activation watermark */}
      <div className="absolute left-[1071px] top-[649px] text-[rgba(120,120,120,0.45)] pointer-events-none whitespace-nowrap">
        <div className="text-[19px] leading-[24px]">Activate Windows</div>
        <div className="text-[14.3px] leading-[22px]">Go to Settings to activate Windows.</div>
      </div>
    </div>
  );
}
